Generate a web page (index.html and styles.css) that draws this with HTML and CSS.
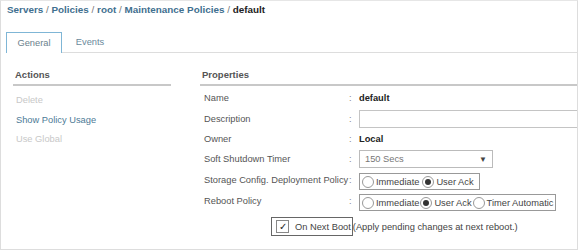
FILE: index.html
```html
<!DOCTYPE html>
<html lang="en">
<head>
  <meta charset="UTF-8" />
  <title>Maintenance Policies - default</title>
  <link rel="stylesheet" href="styles.css">
</head>
<body>

<div class="frame">
  <div class="crumbs">
    <a>Servers</a> <span class="sep">/</span>
    <a>Policies</a> <span class="sep">/</span>
    <a>root</a> <span class="sep">/</span>
    <a>Maintenance Policies</a> <span class="sep">/</span>
    <span class="current">default</span>
  </div>

  <div class="tabs">
    <div class="tab active">General</div>
    <div class="tab">Events</div>
    <div class="tab-rest"></div>
  </div>

  <div class="content">
    <div class="actions">
      <h3>Actions</h3>
      <ul>
        <li class="disabled">Delete</li>
        <li class="link">Show Policy Usage</li>
        <li class="disabled">Use Global</li>
      </ul>
    </div>

    <div class="props">
      <h3>Properties</h3>
      <div class="rows">
        <div class="row">
          <span class="label">Name</span><span class="colon">:</span>
          <span class="value bold">default</span>
        </div>
        <div class="row">
          <span class="label">Description</span><span class="colon">:</span>
          <span class="value"><span class="input"></span></span>
        </div>
        <div class="row short">
          <span class="label">Owner</span><span class="colon">:</span>
          <span class="value bold">Local</span>
        </div>
        <div class="row">
          <span class="label">Soft Shutdown Timer</span><span class="colon">:</span>
          <span class="value"><span class="select">150 Secs <span class="arrow">▼</span></span></span>
        </div>
        <div class="row">
          <span class="label">Storage Config. Deployment Policy</span><span class="colon">:</span>
          <span class="value">
            <span class="radios">
              <span class="radio"><i></i>Immediate</span>
              <span class="radio on"><i></i>User Ack</span>
            </span>
          </span>
        </div>
        <div class="row">
          <span class="label">Reboot Policy</span><span class="colon">:</span>
          <span class="value">
            <span class="radios tight">
              <span class="radio"><i></i>Immediate</span>
              <span class="radio on"><i></i>User Ack</span>
              <span class="radio"><i></i>Timer Automatic</span>
            </span>
          </span>
        </div>
        <div class="row boot">
          <span class="check-box"><span class="check">✓</span>On Next Boot</span>
          <span class="note">(Apply pending changes at next reboot.)</span>
        </div>
      </div>
    </div>
  </div>
</div>

</body>
</html>
```

FILE: styles.css
```css
* {
  margin: 0; padding: 0;
  box-sizing: border-box;
}
body {
  background: #fff;
  font-family: 'Liberation Sans', Arial, sans-serif;
  font-size: 9.3px;
  color: #555;
}
.frame {
  width: 578px;
  height: 250px;
  border: 1px solid #ddd;
  border-top-color: #e6e6e6;
  overflow: hidden;
}
.crumbs {
  padding: 3px 0 0 6px;
  height: 31px;
  font-weight: bold;
  font-size: 9.9px;
  color: #3f6f8f;
  white-space: nowrap;
}
.crumbs .sep {
  color: #777;
  font-weight: normal;
}
.crumbs .current {
  color: #222;
}
.tabs {
  display: flex;
  height: 21px;
  padding-left: 5px;
}
.tab {
  width: 56px;
  text-align: center;
  line-height: 20px;
  color: #6a8a9c;
  border-bottom: 1px solid #ddd;
}
.tab.active {
  border: 1px solid #7fb6d6;
  border-bottom: none;
  color: #6b7f8c;
}
.tab-rest {
  flex: 1;
  border-bottom: 1px solid #ddd;
}
.content {
  display: flex;
  padding-top: 16px;
}
h3 {
  font-size: 9.5px;
  font-weight: bold;
  color: #555;
  padding: 0 0 4px 2px;
  border-bottom: 2px solid #c8c8c8;
  height: 17px;
}
.actions {
  flex-shrink: 0;
  width: 158px;
  margin-left: 12px;
}
.actions ul {
  list-style: none;
  padding: 9px 0 0 3px;
}
.actions li {
  height: 19.5px;
}
.actions .disabled {
  color: #c8c8c8;
}
.actions .link {
  color: #4d7a96;
}
.props {
  flex: 1;
  min-width: 0;
  margin-left: 29px;
}
.rows {
  display: flex;
  flex-direction: column;
  gap: 3px;
  padding: 3px 0 0 4px;
  white-space: nowrap;
}
.row {
  display: flex;
  align-items: center;
  height: 18px;
}
.row.short {
  height: 16px;
}
.label {
  flex-shrink: 0;
  width: 145px;
}
.colon {
  flex-shrink: 0;
  width: 10px;
  color: #888;
}
.value {
  flex: 1;
  display: flex;
  align-items: center;
}
.bold {
  font-weight: bold;
  color: #222;
}
.input {
  display: block;
  flex-shrink: 0;
  width: 240px;
  height: 18px;
  border: 1px solid #c4c4c4;
}
.select {
  display: flex;
  justify-content: space-between;
  align-items: center;
  width: 134px;
  height: 18px;
  border: 1px solid #bbb;
  padding: 0 5px 0 5px;
  color: #777;
}
.select .arrow {
  font-size: 8px;
  color: #444;
}
.radios {
  display: flex;
  align-items: center;
  gap: 3px;
  height: 17px;
  border: 1px solid #999;
  padding: 0 5px 0 2px;
  margin-top: 3px;
}
.radios.tight {
  gap: 1px;
  padding-right: 2px;
}
.radio {
  display: flex;
  align-items: center;
  gap: 2px;
  color: #444;
}
.radio i {
  display: block;
  width: 12px;
  height: 12px;
  border: 1px solid #999;
  border-radius: 50%;
  position: relative;
}
.radio.on i::after {
  content: '';
  position: absolute;
  top: 2px; left: 2px;
  width: 6px; height: 6px;
  border-radius: 50%;
  background: #333;
}
.row.boot {
  height: 19px;
  margin-top: 4px;
  padding-left: 67px;
}
.check-box {
  display: flex;
  align-items: center;
  gap: 6px;
  height: 19px;
  border: 1px solid #666;
  padding: 0 1px 0 4px;
  color: #444;
}
.check {
  display: block;
  width: 13px;
  height: 13px;
  border: 1px solid #888;
  font-size: 10px;
  line-height: 11px;
  text-align: center;
  color: #222;
}
.note {
  color: #444;
}
```
